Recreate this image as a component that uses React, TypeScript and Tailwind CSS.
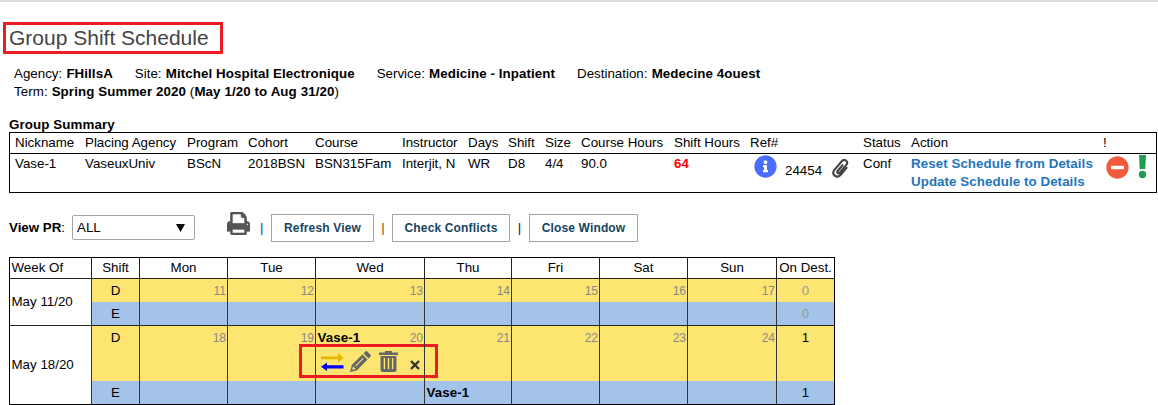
import React from 'react';
import { FaInfoCircle, FaMinusCircle } from 'react-icons/fa';

const summaryCols =
  'grid grid-cols-[70px_102px_61px_67px_87px_66px_40px_37px_36px_93px_76px_113px_48px_192px_54px] pl-[5px]';

const summaryHeaders = [
  'Nickname', 'Placing Agency', 'Program', 'Cohort', 'Course', 'Instructor', 'Days', 'Shift',
  'Size', 'Course Hours', 'Shift Hours', 'Ref#', 'Status', 'Action', '!',
];

const days = ['Mon', 'Tue', 'Wed', 'Thu', 'Fri', 'Sat', 'Sun'];

const PrintIcon = () => (
  <svg className="h-[23px] w-[23px] fill-[#555] stroke-[#555]" strokeWidth="50" viewBox="64 128 1664 1536" preserveAspectRatio="none">
    <path d="M448 1536h896v-256h-896v256zm0-640h896v-384h-160q-40 0-68-28t-28-68v-160h-640v640zm1152 64q0-26-19-45t-45-19-45 19-19 45 19 45 45 19 45-19 19-45zm128 0v416q0 13-9.5 22.5t-22.5 9.5h-224v160q0 40-28 68t-68 28h-960q-40 0-68-28t-28-68v-160h-224q-13 0-22.5-9.5t-9.5-22.5v-416q0-79 56.5-135.5t135.5-56.5h64v-544q0-40 28-68t68-28h672q40 0 88 20t76 48l152 152q28 28 48 76t20 88v256h64q79 0 135.5 56.5t56.5 135.5z" />
  </svg>
);

const ClipIcon = () => (
  <svg className="h-[19px] w-[17px]" viewBox="0 0 17 19" fill="none" stroke="#444" strokeWidth="2.1" strokeLinecap="round">
    <path d="M10.6 6.2 L5.6 12 C4.4 13.6 6.3 15.2 7.6 13.7 L14.2 6.1 C17 2.6 12.6 -0.8 9.8 2.2 L2.6 10.6 C-1.2 15.4 4.6 20.3 8.7 15.7 L14.6 8.9" />
  </svg>
);

const SwapIcon = () => (
  <svg className="h-[18px] w-[23px]" viewBox="0 0 23 18">
    <path d="M0 3.500h17V0L22.500 5 17 9.500V6.300H0z" fill="#e6b800" />
    <path d="M22.500 12.300H6V9.500L0 13.800 6 18V15.500h16.500z" fill="#00f" />
  </svg>
);

const PencilIcon = () => (
  <svg className="h-[21px] w-[21px] fill-[#666]" viewBox="0 0 21 21">
    <path fillRule="evenodd" d="M0 21l1.800-7L12.400 3.400l5.200 5.200L7 19.200zM2.200 18.800l3.600-.9-2.700-2.700zM5.200 14.700l.7.7 7.600-7.600-.7-.7z" />
    <path d="M13.500 2.400l1.700-1.700q1.200-1.200 2.400 0l2.700 2.700q1.200 1.200 0 2.400l-1.700 1.700z" />
  </svg>
);

const TrashIcon = () => (
  <svg className="h-[21px] w-[19px] fill-[#666]" viewBox="0 0 19 21">
    <path d="M0 1.500h6V0h7v1.500h6V4H0z" />
    <path fillRule="evenodd" d="M1.500 5h16v13.500q0 2.500-2.500 2.500H4q-2.500 0-2.500-2.500zM4.700 7v11h1.400V7zM8.800 7v11h1.400V7zM12.900 7v11h1.400V7z" />
  </svg>
);

const CloseIcon = () => (
  <svg className="h-[10px] w-[10px]" viewBox="0 0 10 10" stroke="#333" strokeWidth="2.4">
    <path d="M1 1l8 8M9 1l-8 8" />
  </svg>
);

const Field = ({ label, value }: { label: string; value: string }) => (
  <span>
    {label}: <b className="ml-[0.5px] tracking-[0.08px]">{value}</b>
  </span>
);

const ToolButton = ({ label, className }: { label: string; className: string }) => (
  <button
    className={`h-7 border border-[#a5a5a5] bg-white text-[12px] font-bold tracking-[0.15px] text-[#16445f] ${className}`}
  >
    {label}
  </button>
);

const GroupSummary = () => (
  <div className="h-[61px] w-[1148px] border border-black">
    <div className={`${summaryCols} h-[21px] border-b border-black leading-[19px]`}>
      {summaryHeaders.map((h) => (
        <span key={h} className="whitespace-nowrap">{h}</span>
      ))}
    </div>
    <div className={`${summaryCols} pt-px leading-[18px]`}>
      <span>Vase-1</span>
      <span>VaseuxUniv</span>
      <span>BScN</span>
      <span>2018BSN</span>
      <span>BSN315Fam</span>
      <span>Interjit, N</span>
      <span>WR</span>
      <span>D8</span>
      <span>4/4</span>
      <span>90.0</span>
      <b className="text-[#f00]">64</b>
      <span className="flex items-start pl-1">
        <FaInfoCircle className="size-[23px] text-[#4a6cff]" />
        <span className="mt-[7px] ml-[8px]">24454</span>
        <span className="mt-[4px] ml-[10px]"><ClipIcon /></span>
      </span>
      <span>Conf</span>
      <span className="font-bold tracking-[0.07px] whitespace-nowrap text-[#1f75bb]">
        Reset Schedule from Details
        <br />
        Update Schedule to Details
      </span>
      <span className="flex items-start gap-[9px] pl-[3px]">
        <FaMinusCircle className="mt-px size-[23px] shrink-0 text-[#f15a3a]" />
        <svg className="h-[24px] w-[9px] shrink-0 fill-[#1f9d55]" viewBox="0 0 9 24">
          <path d="M1 0h7L7.300 14H1.700z" />
          <circle cx="4.500" cy="19.500" r="3.700" />
        </svg>
      </span>
    </div>
  </div>
);

type ShiftRowProps = {
  shift: string;
  dates?: number[];
  count: number;
  height: string;
  cells?: Record<number, React.ReactNode>;
};

const ShiftRow = ({ shift, dates, count, height, cells = {} }: ShiftRowProps) => (
  <div
    className={`grid grid-cols-[48px_88px_88px_109px_87px_88px_88px_89px_58px] leading-[24px] ${height} ${
      shift === 'D' ? 'bg-[#fce570]' : 'bg-[#a3c4e8]'
    }`}
  >
    <span className="border-l border-[#333] text-center">{shift}</span>
    {days.map((day, i) => (
      <div key={day} className="relative flex justify-between border-l border-[#333] pr-px pl-[1.5px]">
        <div>{cells[i]}</div>
        {dates && <span className="text-[12px] text-[#888]">{dates[i]}</span>}
      </div>
    ))}
    <span className={`border-l border-[#333] text-center ${count ? 'text-black' : 'text-[#999]'}`}>{count}</span>
  </div>
);

const WeekRow = ({ label, children }: { label: string; children: React.ReactNode }) => (
  <div className="flex border-t border-[#222]">
    <div className="flex w-[81px] items-center pl-[1.5px]">{label}</div>
    <div>{children}</div>
  </div>
);

const VaseActions = () => (
  <>
    <b className="tracking-[0.1px]">Vase-1</b>
    <div className="absolute top-[18px] left-[-17px] flex h-[34px] w-[139px] items-center border-[3px] border-[#ed1c24] pt-px pl-[19px]">
      <SwapIcon />
      <span className="ml-[6px]"><PencilIcon /></span>
      <span className="ml-[8px]"><TrashIcon /></span>
      <span className="mt-[6px] ml-[12px]"><CloseIcon /></span>
    </div>
  </>
);

const ScheduleTable = () => (
  <div className="w-[826px] border border-black">
    <div className="grid h-[20px] grid-cols-[81px_48px_88px_88px_109px_87px_88px_88px_89px_58px] text-center leading-[19px]">
      <span className="pl-[1.5px] text-left">Week Of</span>
      {['Shift', ...days, 'On Dest.'].map((h) => (
        <span key={h} className="border-l border-[#222] whitespace-nowrap">{h}</span>
      ))}
    </div>
    <WeekRow label="May 11/20">
      <ShiftRow shift="D" dates={[11, 12, 13, 14, 15, 16, 17]} count={0} height="h-[23px]" />
      <ShiftRow shift="E" count={0} height="h-[23px]" />
    </WeekRow>
    <WeekRow label="May 18/20">
      <ShiftRow
        shift="D"
        dates={[18, 19, 20, 21, 22, 23, 24]}
        count={1}
        height="h-[55px]"
        cells={{ 2: <VaseActions /> }}
      />
      <ShiftRow shift="E" count={1} height="h-[23px]" cells={{ 3: <b className="tracking-[0.1px]">Vase-1</b> }} />
    </WeekRow>
  </div>
);

export default function App() {
  return (
    <div className="h-[405px] w-[1158px] overflow-hidden bg-white font-['Liberation_Sans',Arial,sans-serif] text-[13.33px] text-black">
      <div className="h-[2px] bg-[#dcdbe0]" />
      <h1 className="mt-5 ml-[3px] h-8 w-[220px] border-[3px] border-[#ed1c24] pl-[3px] text-[21px] leading-[25px] text-[#444]">
        Group Shift Schedule
      </h1>
      <div className="mt-[11px] ml-[14px] leading-[18px]">
        <div className="flex gap-[22px]">
          <Field label="Agency" value="FHillsA" />
          <Field label="Site" value="Mitchel Hospital Electronique" />
          <Field label="Service" value="Medicine - Inpatient" />
          <Field label="Destination" value="Medecine 4ouest" />
        </div>
        <div className="tracking-[0.1px]">
          Term: <b>Spring Summer 2020</b> (<b>May 1/20 to Aug 31/20</b>)
        </div>
      </div>
      <div className="ml-[9px]">
        <h2 className="mt-[14px] h-[17px] leading-[19px] font-bold tracking-[0.1px]">Group Summary</h2>
        <GroupSummary />
        <div className="mt-[18px] flex h-[31px] items-end">
          <span className="w-[63px] pb-[4px]"><b>View PR</b>:</span>
          <div className="mb-[2px] flex h-[25px] w-[123px] items-center justify-between rounded-[2px] border border-[#a5a5a5] pr-[9px] pl-[4px]">
            ALL
            <svg className="h-[8px] w-[9px]" viewBox="0 0 9 8"><path d="M0 0h9L4.500 8z" /></svg>
          </div>
          <span className="mb-[7px] ml-[32px]"><PrintIcon /></span>
          <span className="w-[21px] pb-[4px] pl-[10px] text-[#16445f]">|</span>
          <ToolButton label="Refresh View" className="w-[103px]" />
          <span className="w-[18px] pb-[4px] text-center text-[#8a4a10]">|</span>
          <ToolButton label="Check Conflicts" className="w-[118px]" />
          <span className="w-[19px] pb-[4px] text-center text-[#222]">|</span>
          <ToolButton label="Close Window" className="w-[109px]" />
        </div>
        <div className="mt-[15px]">
          <ScheduleTable />
        </div>
      </div>
    </div>
  );
}
